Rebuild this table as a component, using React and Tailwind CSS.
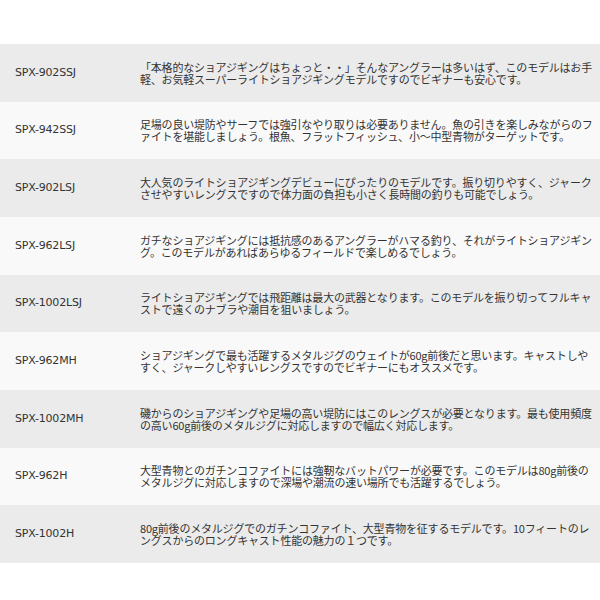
import React from "react";

const rows = [
  ["SPX-902SSJ", "「本格的なショアジギングはちょっと・・」そんなアングラーは多いはず、このモデルはお手", "軽、お気軽スーパーライトショアジギングモデルですのでビギナーも安心です。"],
  ["SPX-942SSJ", "足場の良い堤防やサーフでは強引なやり取りは必要ありません。魚の引きを楽しみながらのフ", "ァイトを堪能しましょう。根魚、フラットフィッシュ、小～中型青物がターゲットです。"],
  ["SPX-902LSJ", "大人気のライトショアジギングデビューにぴったりのモデルです。振り切りやすく、ジャーク", "させやすいレングスですので体力面の負担も小さく長時間の釣りも可能でしょう。"],
  ["SPX-962LSJ", "ガチなショアジギングには抵抗感のあるアングラーがハマる釣り、それがライトショアジギン", "グ。このモデルがあればあらゆるフィールドで楽しめるでしょう。"],
  ["SPX-1002LSJ", "ライトショアジギングでは飛距離は最大の武器となります。このモデルを振り切ってフルキャ", "ストで遠くのナブラや潮目を狙いましょう。"],
  ["SPX-962MH", "ショアジギングで最も活躍するメタルジグのウェイトが60g前後だと思います。キャストしや", "すく、ジャークしやすいレングスですのでビギナーにもオススメです。"],
  ["SPX-1002MH", "磯からのショアジギングや足場の高い堤防にはこのレングスが必要となります。最も使用頻度", "の高い60g前後のメタルジグに対応しますので幅広く対応します。"],
  ["SPX-962H", "大型青物とのガチンコファイトには強靭なバットパワーが必要です。このモデルは80g前後の", "メタルジグに対応しますので深場や潮流の速い場所でも活躍するでしょう。"],
  ["SPX-1002H", "80g前後のメタルジグでのガチンコファイト、大型青物を征するモデルです。10フィートのレ", "ングスからのロングキャスト性能の魅力の１つです。"],
];

export default function App() {
  return (
    <div className="w-[600px] h-[600px] bg-white overflow-hidden text-[#333333]">
      <div className="pt-[44px] flex flex-col">
        {rows.map(([model, l1, l2], i) => (
          <div
            key={model}
            className={
              (i % 2 === 0 ? "bg-[#ebebeb]" : "bg-[#f9f9f9]") +
              " h-[57.67px] flex items-center"
            }
          >
            <div className="w-[140px] pl-[15px] shrink-0 text-[11px] leading-[12px] font-['DejaVu_Sans',sans-serif] tracking-[-0.2px]">
              {model}
            </div>
            <div className="text-[11px] leading-[12px] tracking-[-0.2px] whitespace-nowrap font-['Noto_Sans_CJK_JP','Noto_Sans',sans-serif]">
              <div>{l1}</div>
              <div>{l2}</div>
            </div>
          </div>
        ))}
      </div>
    </div>
  );
}
